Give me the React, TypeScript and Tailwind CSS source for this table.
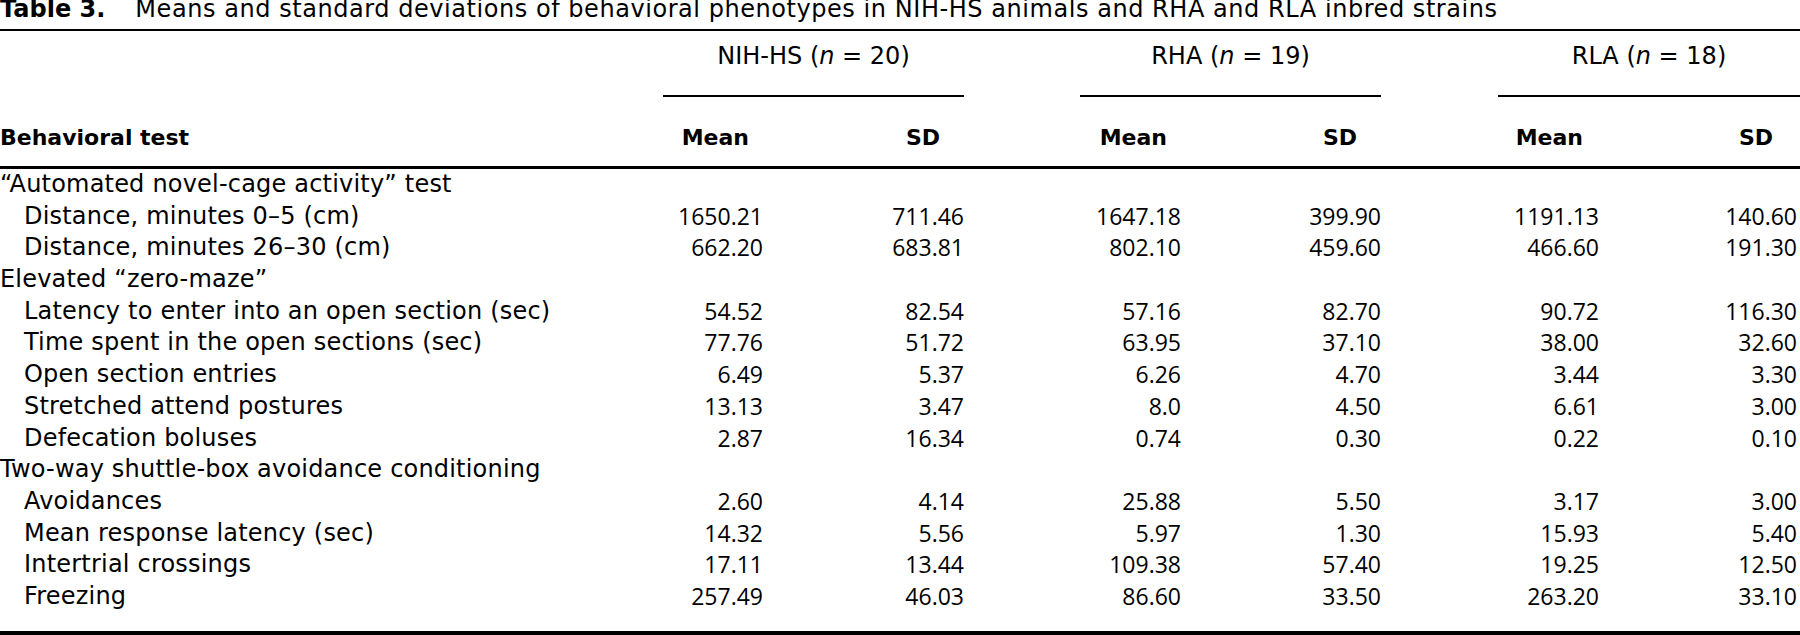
type Row = { label: string; group?: boolean; v?: string[] };

const rows: Row[] = [
  { label: "“Automated novel-cage activity” test", group: true },
  { label: "Distance, minutes 0–5 (cm)", v: ["1650.21", "711.46", "1647.18", "399.90", "1191.13", "140.60"] },
  { label: "Distance, minutes 26–30 (cm)", v: ["662.20", "683.81", "802.10", "459.60", "466.60", "191.30"] },
  { label: "Elevated “zero-maze”", group: true },
  { label: "Latency to enter into an open section (sec)", v: ["54.52", "82.54", "57.16", "82.70", "90.72", "116.30"] },
  { label: "Time spent in the open sections (sec)", v: ["77.76", "51.72", "63.95", "37.10", "38.00", "32.60"] },
  { label: "Open section entries", v: ["6.49", "5.37", "6.26", "4.70", "3.44", "3.30"] },
  { label: "Stretched attend postures", v: ["13.13", "3.47", "8.0", "4.50", "6.61", "3.00"] },
  { label: "Defecation boluses", v: ["2.87", "16.34", "0.74", "0.30", "0.22", "0.10"] },
  { label: "Two-way shuttle-box avoidance conditioning", group: true },
  { label: "Avoidances", v: ["2.60", "4.14", "25.88", "5.50", "3.17", "3.00"] },
  { label: "Mean response latency (sec)", v: ["14.32", "5.56", "5.97", "1.30", "15.93", "5.40"] },
  { label: "Intertrial crossings", v: ["17.11", "13.44", "109.38", "57.40", "19.25", "12.50"] },
  { label: "Freezing", v: ["257.49", "46.03", "86.60", "33.50", "263.20", "33.10"] },
];

const cols = "grid grid-cols-[563px_200px_201px_217px_200px_218px_201px]";

const GroupHead = ({ name, n, offset }: { name: string; n: string; offset: string }) => (
  <div className={`col-span-2 ${offset} pt-[14px] pb-[27px] border-b-2 border-black text-center leading-[23px] whitespace-nowrap`}>
    {name} (<i>n</i> = {n})
  </div>
);

export default function App() {
  return (
    <div className="w-[1800px] h-[635px] bg-white text-black font-['DejaVu_Sans',sans-serif] text-[24px]">
      <div className="pb-[11px] border-b-2 border-black leading-[18px] whitespace-nowrap">
        <span className="font-bold">Table 3.</span>
        <span className="ml-[30px] tracking-[0.55px]">
          Means and standard deviations of behavioral phenotypes in NIH-HS animals and RHA and RLA inbred strains
        </span>
      </div>

      <div className="border-b-[3px] border-black">
        <div className={cols}>
          <div />
          <GroupHead name="NIH-HS" n="20" offset="ml-[100px]" />
          <GroupHead name="RHA" n="19" offset="ml-[116px]" />
          <GroupHead name="RLA" n="18" offset="ml-[117px]" />
        </div>
        <div className={`${cols} font-bold text-[22px] leading-[23px] pt-[29px] pb-[17px]`}>
          <div>Behavioral test</div>
          <div className="text-right pr-[14px]">Mean</div>
          <div className="text-right pr-[24px]">SD</div>
          <div className="text-right pr-[14px]">Mean</div>
          <div className="text-right pr-[24px]">SD</div>
          <div className="text-right pr-[16px]">Mean</div>
          <div className="text-right pr-[27px]">SD</div>
        </div>
      </div>

      <div className="pb-[18px] border-b-4 border-black">
        {rows.map((r) => (
          <div key={r.label} className={`${cols} leading-[31.7px] h-[31.7px]`}>
            <div className={`whitespace-nowrap tracking-[0.2px] ${r.group ? "" : "pl-[24px]"}`}>{r.label}</div>
            {(r.v ?? ["", "", "", "", "", ""]).map((x, i) => (
              <div
                key={i}
                className={`text-right font-['Open_Sans',sans-serif] text-[23px] ${i === 5 ? "pr-[3px]" : ""}`}
              >
                {x}
              </div>
            ))}
          </div>
        ))}
      </div>
    </div>
  );
}
